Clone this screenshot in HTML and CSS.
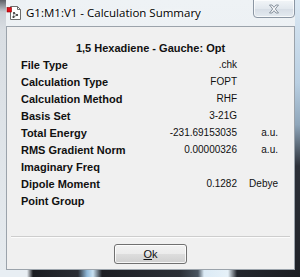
FILE: index.html
```html
<!DOCTYPE html>
<html lang="en">
<head>
    <meta charset="UTF-8">
    <title>G1:M1:V1 - Calculation Summary</title>
    <link rel="stylesheet" href="styles.css">
</head>
<body>
    <div class="window">
        <div class="titlebar">
            <svg class="app-icon" width="16" height="16" viewBox="0 0 16 16">
                <path d="M4.5 1.5h7l3 3v10h-10z" fill="#fff" stroke="#6d6d6d"/>
                <path d="M11.5 1.5v3h3" fill="none" stroke="#6d6d6d"/>
                <circle cx="8" cy="8" r="1.1" fill="#333"/>
                <circle cx="11" cy="10" r="1.1" fill="#333"/>
                <circle cx="7.5" cy="12" r="1.1" fill="#333"/>
                <path d="M8 8l3 2-3.5 2z" fill="none" stroke="#555" stroke-width="0.7"/>
                <rect x="1" y="2.5" width="4.5" height="4.5" fill="#e0101a" stroke="#8a0000" stroke-width="0.6"/>
            </svg>
            <span class="title">G1:M1:V1 - Calculation Summary</span>
            <div class="close-btn">
                <svg width="12" height="10" viewBox="0 0 12 10">
                    <path d="M1.5 1h2.5l2 2.3 2-2.3h2.5l-3.2 4 3.2 4h-2.5l-2-2.3-2 2.3h-2.5l3.2-4z" fill="#f4f6f8" stroke="#7f8a96" stroke-width="0.9" stroke-linejoin="round"/>
                </svg>
            </div>
        </div>
        <div class="panel">
            <div class="heading">1,5 Hexadiene - Gauche: Opt</div>
            <div class="summary">
                <div class="label">File Type</div><div class="value">.chk</div><div class="unit"></div>
                <div class="label">Calculation Type</div><div class="value">FOPT</div><div class="unit"></div>
                <div class="label">Calculation Method</div><div class="value">RHF</div><div class="unit"></div>
                <div class="label">Basis Set</div><div class="value">3-21G</div><div class="unit"></div>
                <div class="label">Total Energy</div><div class="value">-231.69153035</div><div class="unit">a.u.</div>
                <div class="label">RMS Gradient Norm</div><div class="value">0.00000326</div><div class="unit">a.u.</div>
                <div class="label">Imaginary Freq</div><div class="value"></div><div class="unit"></div>
                <div class="label">Dipole Moment</div><div class="value">0.1282</div><div class="unit">Debye</div>
                <div class="label">Point Group</div><div class="value"></div><div class="unit"></div>
            </div>
            <div class="separator"></div>
            <div class="actions">
                <button class="ok-btn"><u>O</u>k</button>
            </div>
        </div>
        <div class="bottom-glass"></div>
    </div>
</body>
</html>
```

FILE: styles.css
```css
body {
    margin: 0;
    font-family: "Liberation Sans", Arial, sans-serif;
    background-color: #dfe6ec;
}
.window {
    width: 300px;
    height: 277px;
    overflow: hidden;
    background:
        linear-gradient(to bottom, #dbe8f3 0, #b9cfe2 30%, #8fa6ba 45%, #2c3038 60%, #1f2228 100%) right / 5px 100% no-repeat,
        linear-gradient(to bottom, #5d6066 0, #c9ced4 12px, #d9dee3 30px, #e6ebef 100%) left / 6px 100% no-repeat,
        linear-gradient(to bottom, #eef2f5, #e3e9ee);
}
.titlebar {
    height: 26px;
    display: flex;
    align-items: flex-start;
    position: relative;
}
.app-icon {
    margin: 5px 0 0 6px;
}
.title {
    margin: 5px 0 0 4px;
    font-family: "Open Sans", "Noto Sans", sans-serif;
    font-size: 11.5px;
    line-height: 16px;
    color: #000;
    text-shadow: 0 0 6px #fff, 0 0 3px #fff;
}
.close-btn {
    position: absolute;
    left: 253px;
    top: -1px;
    width: 40px;
    height: 17px;
    border: 1px solid #8b96a3;
    border-radius: 0 0 4px 4px;
    background: linear-gradient(to bottom, #f2f5f8, #e2e8ee 50%, #d6dde5 51%, #e4eaf0);
    box-shadow: inset 0 0 0 1px rgba(255, 255, 255, 0.7);
    display: flex;
    align-items: center;
    justify-content: center;
}
.panel {
    margin: 0 5px 0 6px;
    height: 229px;
    background-color: #f0f0f0;
    border: 1px solid #9ba3ab;
    padding-top: 13px;
    box-sizing: content-box;
}
.heading {
    text-align: center;
    font-weight: bold;
    font-size: 11px;
    line-height: 16px;
    color: #111;
}
.summary {
    display: grid;
    grid-template-columns: 1fr auto 41px;
    grid-auto-rows: 17px;
    align-items: center;
    padding: 0 16px 0 14px;
    font-size: 10px;
    color: #111;
}
.label {
    font-weight: bold;
    font-size: 11px;
}
.value {
    text-align: right;
}
.unit {
    text-align: right;
}
.separator {
    margin: 27px 4px 0 4px;
    border-top: 1px solid #cdcdcd;
    border-bottom: 1px solid #fcfcfc;
}
.actions {
    display: flex;
    justify-content: center;
    padding-top: 6px;
}
.ok-btn {
    width: 73px;
    height: 20px;
    padding: 0;
    border: 1px solid #707070;
    border-radius: 3px;
    background: linear-gradient(to bottom, #f2f2f2 0, #ebebeb 50%, #dddddd 51%, #cfcfcf 100%);
    box-shadow: inset 0 0 0 1px rgba(255, 255, 255, 0.8);
    font-family: "Liberation Sans", Arial, sans-serif;
    font-size: 11px;
    color: #111;
}
.bottom-glass {
    height: 7px;
    background: linear-gradient(to right, #e8eef3 0, #e8eef3 9%, #1a1c20 11%, #2a2d33 26%, #8fb8d8 29%, #c8e0f0 31%, #1d1f24 34%, #2c3036 60%, #4a5560 66%, #dbeaf5 68%, #e6f1f8 76%, #23262c 79%, #1c1e22 100%);
}
```
